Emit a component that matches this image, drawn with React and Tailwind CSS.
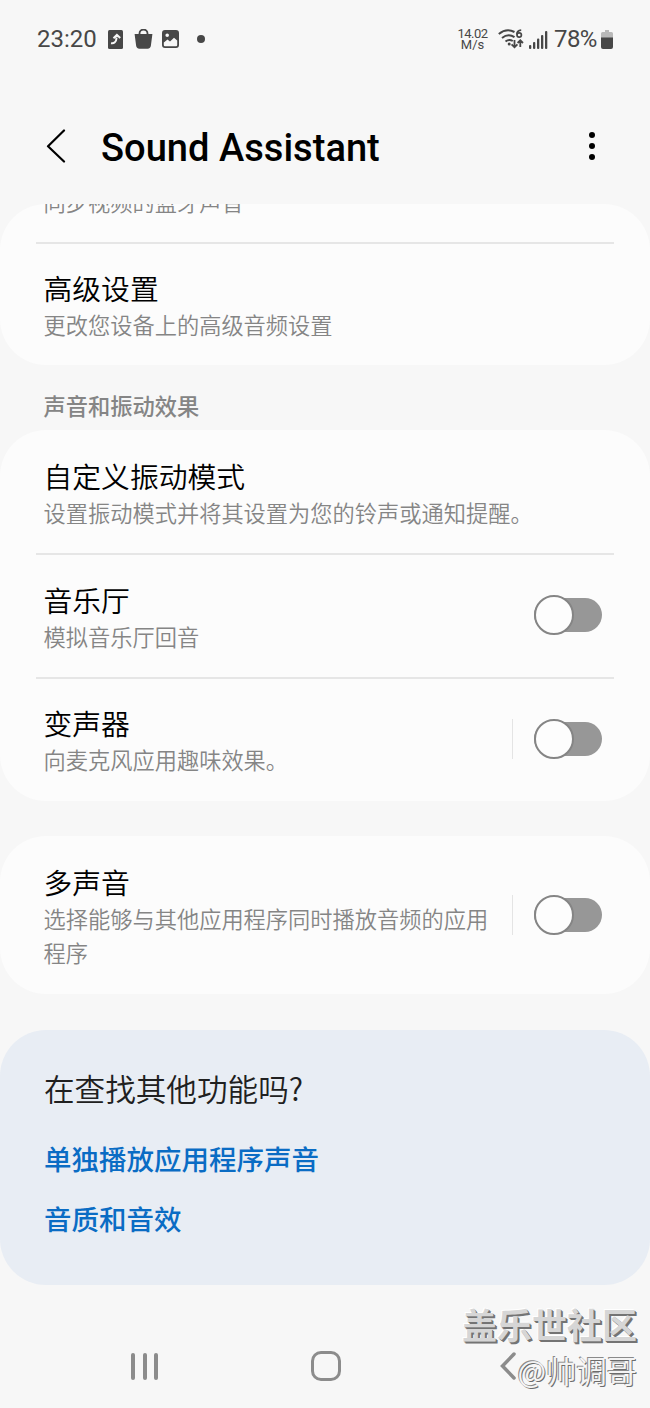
import { useState } from "react";
import clsx from "clsx";

function StatusBar() {
  return (
    <div className="flex h-[78px] items-center justify-between pl-[37px] pr-[37px] text-[#474747]">
      <div className="flex items-center">
        <span className="w-[60px] text-[24px] leading-none">23:20</span>
        <svg className="ml-[11px] h-[19px] w-[15px]" viewBox="0 0 15 19">
          <rect width="15" height="19" rx="1.5" fill="currentColor" />
          <path d="M3 13.2c3.2.6 5.2-1.4 5.4-4.4V7.5M5.5 8.2l3.4-3.4L12.2 8" fill="none" stroke="#f7f7f7" strokeWidth="2" />
        </svg>
        <svg className="ml-[11px] h-[20px] w-[19px]" viewBox="0 0 19 20">
          <path d="M5.5 6V4.5a4 4 0 0 1 8 0V6" fill="none" stroke="currentColor" strokeWidth="1.8" />
          <path d="M.6 5h17.8l-1.5 11.5a3.5 3.5 0 0 1-3.3 3.2H5.4a3.5 3.5 0 0 1-3.3-3.2z" fill="currentColor" />
        </svg>
        <svg className="ml-[9px] h-[18px] w-[17px]" viewBox="0 0 17 18">
          <path
            d="M3 0h11a3 3 0 0 1 3 3v12a3 3 0 0 1-3 3H3a3 3 0 0 1-3-3V3a3 3 0 0 1 3-3zM1.8 12.5V15a1.2 1.2 0 0 0 1.2 1.2h11a1.2 1.2 0 0 0 1.2-1.2v-4.5L12 7.8l-4 3.7L5.5 9.6zM5.2 3.5a1.8 1.8 0 1 0 0 3.6 1.8 1.8 0 0 0 0-3.6z"
            fill="currentColor"
            fillRule="evenodd"
          />
        </svg>
        <span className="ml-[18px] h-[8px] w-[8px] rounded-full bg-[#474747]" />
      </div>

      <div className="flex items-center">
        <div className="mr-px w-[31px] text-center text-[13px] leading-[11px]">
          <div className="tracking-[-0.5px]">14.02</div>
          <div>M/s</div>
        </div>
        <svg className="ml-[9px] h-[20px] w-[26px]" viewBox="0 0 26 20" fill="none" stroke="currentColor">
          <path d="M.8 5C6 .8 12 .6 16.5 3M4 9c4-3.2 8.5-3.4 12.5-.8M7.5 12.6c2.3-2 5-2 7.3-.6" strokeWidth="2" />
          <circle cx="11.2" cy="15" r="1.5" fill="currentColor" stroke="none" />
          <path d="M23.2 1.2c-3 .2-4.3 2-4.3 4.4" strokeWidth="1.8" />
          <circle cx="21.2" cy="6" r="2.2" strokeWidth="1.7" />
          <path d="M16.5 11v7M13.6 15.3l2.9 3 2.9-3M22.3 18v-6.5M19.6 14l2.7-2.7L25 14" strokeWidth="1.8" />
        </svg>
        <svg className="ml-[5px] h-[19px] w-[19px]" viewBox="0 0 19 19" fill="currentColor">
          <rect x="0" y="15" width="2.3" height="4" rx="1" />
          <rect x="4" y="12" width="2.3" height="7" rx="1" />
          <rect x="8" y="8.5" width="2.3" height="10.5" rx="1" />
          <rect x="12" y="5" width="2.3" height="14" rx="1" />
          <rect x="16" y="1" width="2.3" height="18" rx="1" />
        </svg>
        <span className="ml-[6px] w-[43px] whitespace-nowrap text-[24px] leading-none tracking-[-0.6px]">78%</span>
        <svg className="ml-[4px] h-[19px] w-[12px]" viewBox="0 0 12 19">
          <path d="M4 0h4v2h2.5A1.5 1.5 0 0 1 12 3.5V8H0V3.5A1.5 1.5 0 0 1 1.5 2H4z" fill="#b9b9b9" />
          <path d="M0 7.5h12V17a2 2 0 0 1-2 2H2a2 2 0 0 1-2-2z" fill="currentColor" />
        </svg>
      </div>
    </div>
  );
}

function Header() {
  return (
    <header className="flex h-[126px] items-center pl-[46px] pr-[55px] pt-[14px]">
      <svg className="mt-[-4px] h-[34px] w-[20px]" viewBox="0 0 20 34" fill="none" stroke="black" strokeWidth="2.2" strokeLinecap="round" strokeLinejoin="round">
        <path d="M18 1.5L2 17.2l16 15.3" />
      </svg>
      <h1 className="ml-[35px] flex-1 whitespace-nowrap text-[38.1px] font-medium leading-none text-black">
        Sound Assistant
      </h1>
      <div className="mt-[-4px] flex w-[6px] flex-col gap-[5px]">
        <span className="h-[6px] w-[6px] rounded-full bg-black" />
        <span className="h-[6px] w-[6px] rounded-full bg-black" />
        <span className="h-[6px] w-[6px] rounded-full bg-black" />
      </div>
    </header>
  );
}

function Toggle({ checked, onChange }) {
  return (
    <button
      role="switch"
      aria-checked={checked}
      onClick={() => onChange(!checked)}
      className="flex h-[40px] w-[68px] shrink-0 items-center"
    >
      <span className={clsx("flex h-[34px] w-full items-center rounded-full", checked ? "justify-end bg-[#0a6cc4]" : "bg-[#979797]")}>
        <span className="h-[40px] w-[40px] shrink-0 rounded-full border-2 border-[#858585] bg-[#fdfdfd]" />
      </span>
    </button>
  );
}

function Row({ title, description, toggle = false, separator = false }) {
  const [on, setOn] = useState(false);

  return (
    <div className="flex items-center pl-[43.5px] pr-[48px]">
      <div className="flex-1 pb-[22px] pt-[30px]">
        {title && <div className="text-[28.8px] font-[350] leading-[37px] text-black">{title}</div>}
        <div className="text-[22.24px] font-[350] leading-[34px] text-[#858585]">{description}</div>
      </div>
      {toggle && (
        <div className="flex shrink-0 items-center">
          {separator && <span className="ml-[20px] mr-[21px] h-[40px] w-px bg-[#e4e4e4]" />}
          <Toggle checked={on} onChange={setOn} />
        </div>
      )}
    </div>
  );
}

function Divider() {
  return <div className="mx-[36px] -mb-[1.5px] h-[2px] bg-[#e6e6e6]" />;
}

function Card({ children, className }) {
  return <section className={clsx("rounded-[46px] bg-[#fcfcfc]", className)}>{children}</section>;
}

function NavBar() {
  return (
    <nav className="flex h-[84px] items-center pl-[131px] text-[#8c8c8c]">
      <div className="flex w-[27px] justify-between">
        <span className="h-[27px] w-[4px] rounded-full bg-[#8c8c8c]" />
        <span className="h-[27px] w-[4px] rounded-full bg-[#8c8c8c]" />
        <span className="h-[27px] w-[4px] rounded-full bg-[#8c8c8c]" />
      </div>
      <span className="ml-[153px] h-[30px] w-[30px] rounded-[10px] border-[3.5px] border-[#8c8c8c]" />
      <svg className="ml-[159px] h-[28px] w-[16px]" viewBox="0 0 16 28" fill="none" stroke="currentColor" strokeWidth="3.5" strokeLinecap="round">
        <path d="M14 2L2.5 14 14 26" />
      </svg>
    </nav>
  );
}

function Watermark() {
  return (
    <div className="pointer-events-none absolute right-[13px] top-[1299px] flex flex-col items-end whitespace-nowrap font-['Noto_Sans_CJK_SC',sans-serif]">
      <span className="text-[35px] font-bold leading-[50px] text-[#d6d6d6] [text-shadow:1px_1px_0_#747474,2px_2px_0_#747474,-1px_-1px_0_#ffffff]">
        盖乐世社区
      </span>
      <span className="mt-[-2px] text-[30.3px] leading-[46px] text-[#f4f4f4] [text-shadow:1px_1px_0_#6c6c6c,-1px_-1px_0_#8a8a8a]">
        @帅调哥
      </span>
    </div>
  );
}

export default function App() {
  return (
    <div className="relative flex h-[1408px] w-[650px] flex-col overflow-hidden bg-[#f7f7f7] font-[Roboto,'Noto_Sans_CJK_SC',sans-serif]">
      <StatusBar />
      <Header />

      <main className="h-[1120px] overflow-hidden rounded-t-[46px]">
        {/* first card is scrolled half out of view */}
        <Card className="mt-[-48.5px] h-[209.5px]">
          <Row description="同步视频的蓝牙声音" />
          <Divider />
          <Row title="高级设置" description="更改您设备上的高级音频设置" />
        </Card>

        <h2 className="pb-[6px] pl-[43.5px] pt-[26px] text-[22.25px] font-medium leading-[33px] text-[#858585]">
          声音和振动效果
        </h2>

        <Card className="h-[371px]">
          <Row title="自定义振动模式" description="设置振动模式并将其设置为您的铃声或通知提醒。" />
          <Divider />
          <Row title="音乐厅" description="模拟音乐厅回音" toggle />
          <Divider />
          <Row title="变声器" description="向麦克风应用趣味效果。" toggle separator />
        </Card>

        <Card className="mt-[35px] h-[158px]">
          <Row title="多声音" description="选择能够与其他应用程序同时播放音频的应用程序" toggle separator />
        </Card>

        <section className="mt-[36px] h-[255px] rounded-[46px] bg-[#e8edf4] pl-[44px] pt-[35px] font-['Noto_Sans_CJK_SC',sans-serif]">
          <h3 className="text-[30.6px] font-[350] leading-[46px] text-[#202020]">在查找其他功能吗?</h3>
          <a className="mt-[26px] block text-[27.5px] font-medium leading-[42px] text-[#0a6cc4]">单独播放应用程序声音</a>
          <a className="mt-[18px] block text-[27.5px] font-medium leading-[42px] text-[#0a6cc4]">音质和音效</a>
        </section>
      </main>

      <NavBar />
      <Watermark />
    </div>
  );
}
